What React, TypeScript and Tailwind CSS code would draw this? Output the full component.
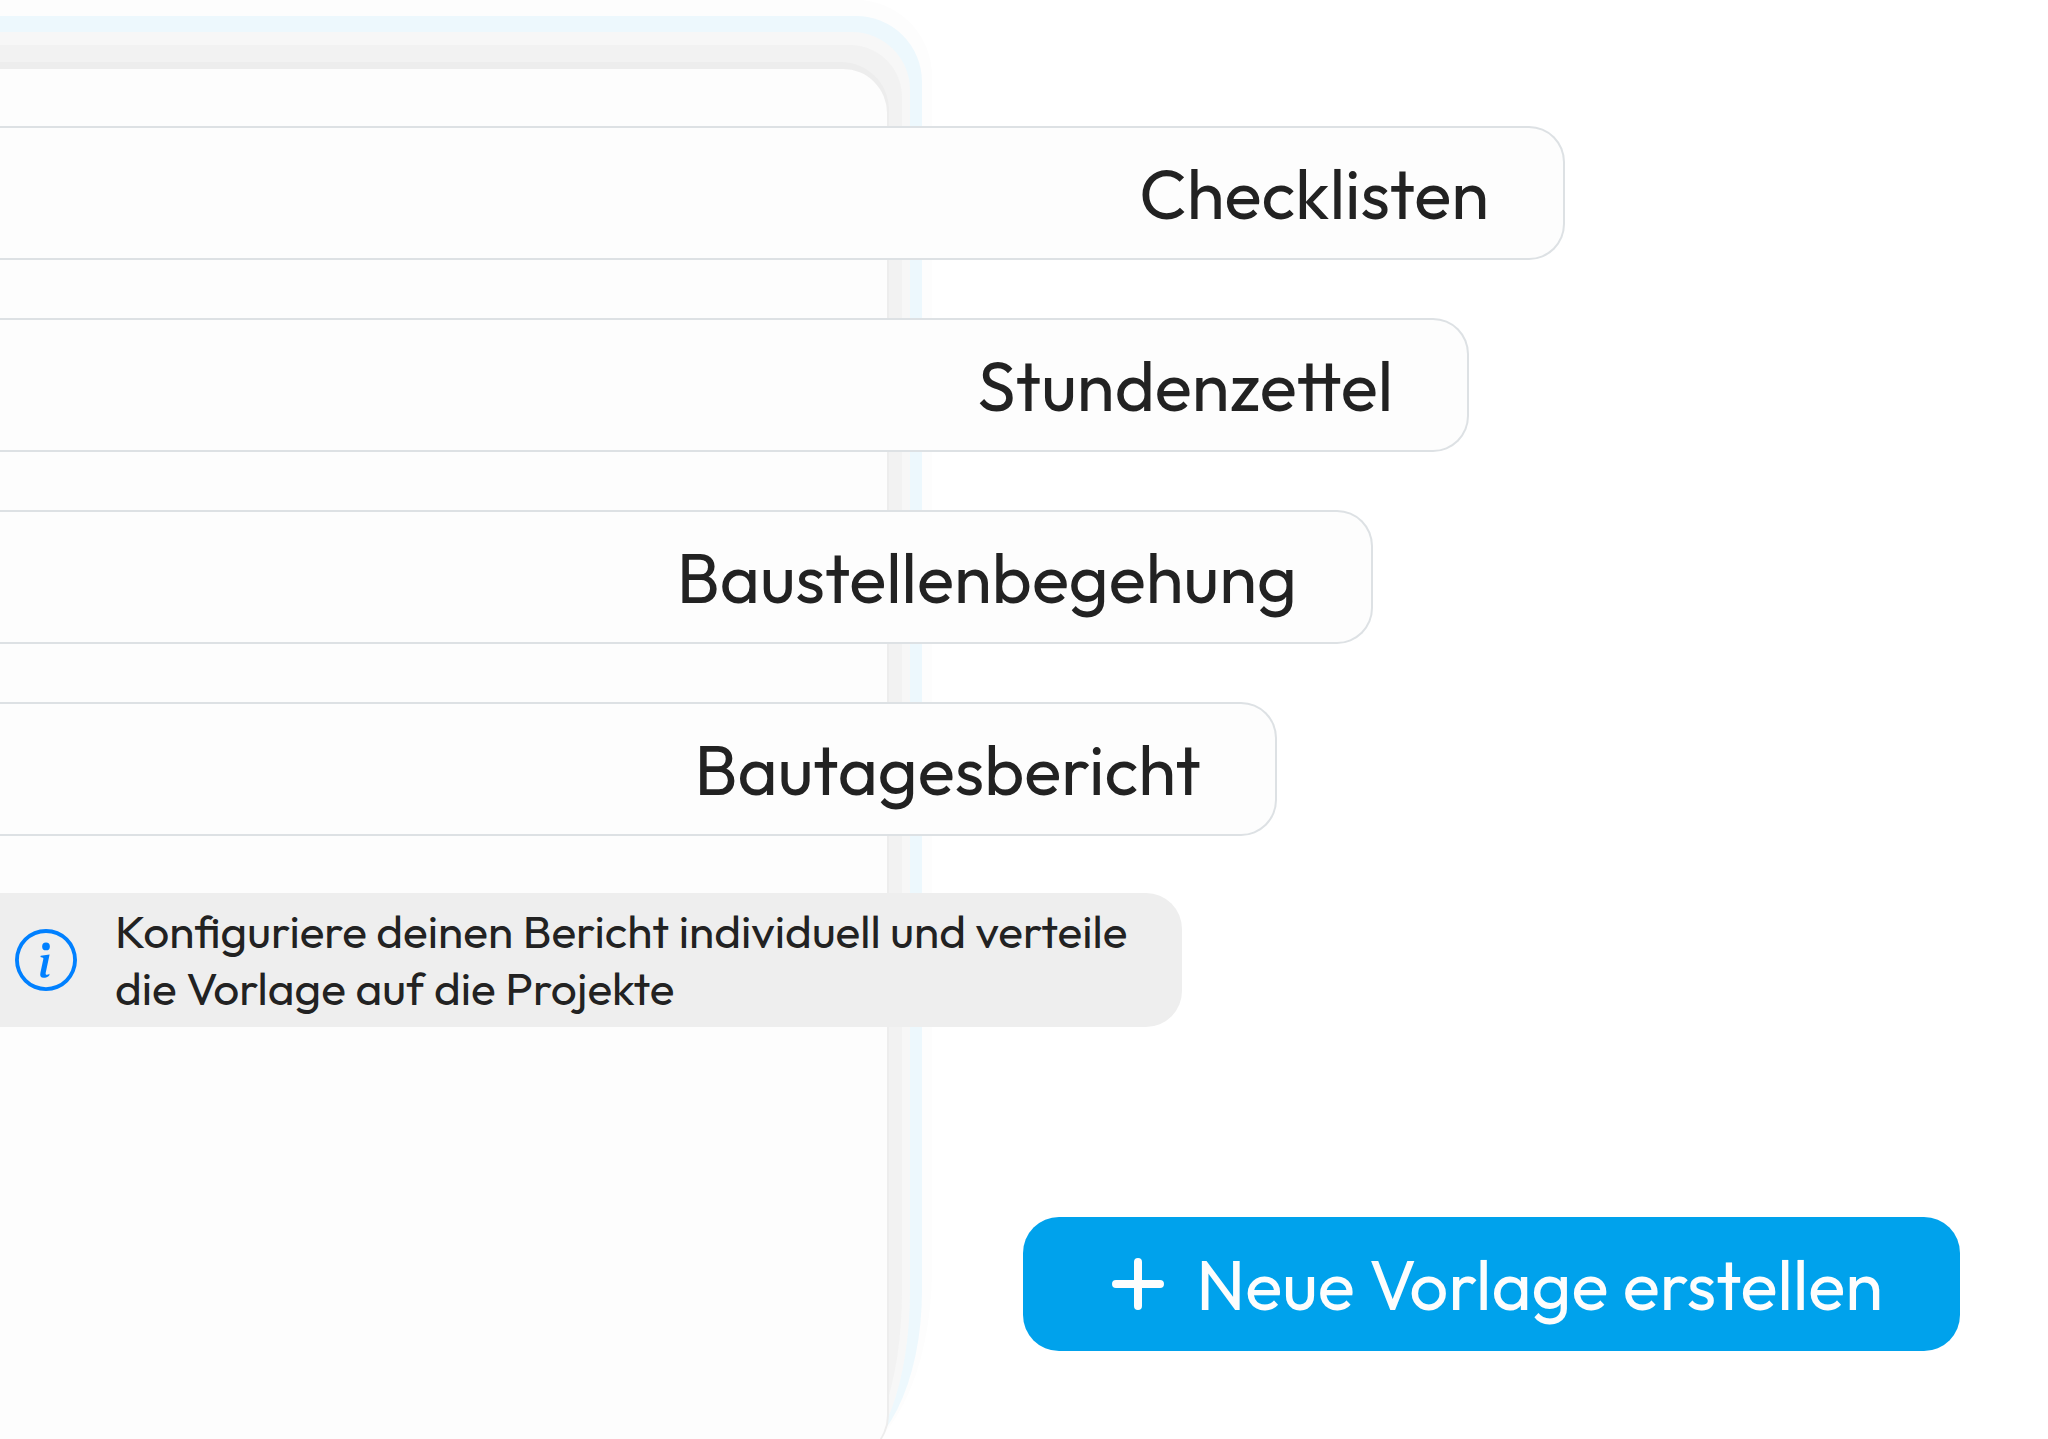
import type { ReactNode } from "react"
import { BsInfoCircle } from "react-icons/bs"

const templates = [
  { id: 1, name: "Checklisten", inset: "mr-[483px]" },
  { id: 2, name: "Stundenzettel", inset: "mr-[579px]" },
  { id: 3, name: "Baustellenbegehung", inset: "mr-[675px]" },
  { id: 4, name: "Bautagesbericht", inset: "mr-[771px]" },
]

function PlusIcon() {
  return (
    <svg viewBox="0 0 52 52" className="size-13" fill="none" stroke="currentColor" strokeWidth="8" strokeLinecap="round" aria-hidden="true">
      <path d="M26 4v44M4 26h44" />
    </svg>
  )
}

// Stepped glow: every layer wraps the next one and leaves a band at the top and right
function Panel({ children }: { children?: ReactNode }) {
  return (
    <div className="col-start-1 row-start-1 mr-[1116px] -mb-5 grid rounded-tr-[76px] rounded-br-[96px_190px] bg-[#fdfdfd] pt-4 pr-2.5">
      <div className="grid rounded-tr-[66px] rounded-br-[85px_168px] bg-[#edf8fd] pt-4 pr-3">
        <div className="grid rounded-tr-[58px] rounded-br-[64px_168px] bg-[#f7f7f7] pt-[13px] pr-2">
          <div className="grid rounded-tr-[52px] rounded-br-[60px_168px] bg-[#f2f2f2] pt-[17px] pr-[13px]">
            <div className="grid rounded-tr-[48px] rounded-br-[44px] bg-[#ededed] pt-[7px] pr-0.5">
              <div className="rounded-r-[44px] bg-[#fdfdfd]">{children}</div>
            </div>
          </div>
        </div>
      </div>
    </div>
  )
}

export default function App() {
  return (
    <div className="grid min-h-screen grid-cols-1 overflow-hidden bg-white font-['Outfit','Lato',sans-serif] text-[#222222]">
      <Panel />
      <main className="col-start-1 row-start-1 flex flex-col pt-[126px] pb-22">
        <ul className="flex flex-col gap-[58px] text-[69px] leading-[84px]">
          {templates.map((template) => (
            <li key={template.id} className={template.inset}>
              <a
                href="#"
                className="flex h-[134px] items-center justify-end rounded-r-[36px] border-2 border-l-0 border-[#dde1e4] bg-[#fdfdfd] pt-0.5 pr-[74px]"
              >
                {template.name}
              </a>
            </li>
          ))}
        </ul>
        <div className="mt-[57px] mr-[866px] flex h-[134px] items-center gap-[38px] rounded-r-[36px] bg-[#eeeeee] pr-9 pl-[15px]">
          <BsInfoCircle className="size-[62px] shrink-0 text-[#0080ff]" />
          <p className="text-[46px] leading-[57px]">
            Konfiguriere deinen Bericht individuell und verteile die Vorlage auf die Projekte
          </p>
        </div>
        <button
          type="button"
          className="mt-auto mr-[88px] flex h-[134px] items-center gap-8 self-end rounded-[36px] bg-[#00a2ec] pr-[77px] pl-[89px] text-[69px] leading-[84px] text-[#fdfdfd]"
        >
          <PlusIcon />
          <span className="pt-0.5">Neue Vorlage erstellen</span>
        </button>
      </main>
    </div>
  )
}
